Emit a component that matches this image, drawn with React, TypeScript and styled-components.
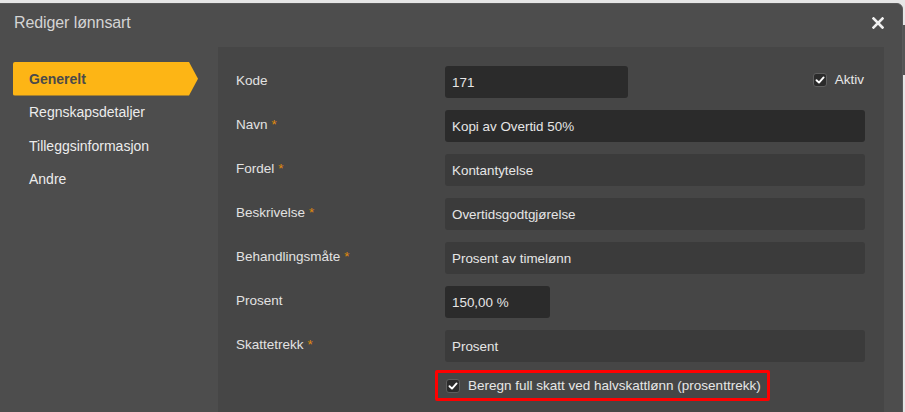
import React from 'react';
import styled, { createGlobalStyle } from 'styled-components';

const GlobalStyle = createGlobalStyle`
  html, body {
    margin: 0;
    padding: 0;
    background: #e6e6e6;
    font-family: 'Liberation Sans', Arial, sans-serif;
    overflow: hidden;
  }
`;

type Field = {
  label: string;
  value: string;
  required?: boolean;
  width?: number;
  readOnly?: boolean;
};

const fields: Field[] = [
  { label: 'Kode', value: '171', width: 183 },
  { label: 'Navn', value: 'Kopi av Overtid 50%', required: true },
  { label: 'Fordel', value: 'Kontantytelse', required: true, readOnly: true },
  { label: 'Beskrivelse', value: 'Overtidsgodtgjørelse', required: true, readOnly: true },
  { label: 'Behandlingsmåte', value: 'Prosent av timelønn', required: true, readOnly: true },
  { label: 'Prosent', value: '150,00 %', width: 105 },
  { label: 'Skattetrekk', value: 'Prosent', required: true, readOnly: true },
];

const tabs = ['Generelt', 'Regnskapsdetaljer', 'Tilleggsinformasjon', 'Andre'];

const CheckMark = () => (
  <svg width="10" height="10" viewBox="0 0 10 10">
    <path d="M1.5 5.2 L4 7.6 L8.6 2.4" fill="none" stroke="#fff" strokeWidth="1.9" strokeLinecap="round" strokeLinejoin="round" />
  </svg>
);

const Checkbox: React.FC<{ label: string }> = ({ label }) => (
  <CheckLabel>
    <Box>
      <CheckMark />
    </Box>
    {label}
  </CheckLabel>
);

export default function App() {
  return (
    <>
      <GlobalStyle />
      <Page>
        <Backdrop />
        <Modal>
          <Header>
            <Title>Rediger lønnsart</Title>
            <Close aria-label="Lukk">
              <svg width="12" height="12" viewBox="0 0 12 12">
                <path d="M1.5 1.5 L10.5 10.5 M10.5 1.5 L1.5 10.5" stroke="#f0f0f0" strokeWidth="2.6" strokeLinecap="square" />
              </svg>
            </Close>
          </Header>
          <Body>
            <Sidebar>
              {tabs.map((t, i) => (
                <Tab key={t} active={i === 0}>
                  {t}
                </Tab>
              ))}
            </Sidebar>
            <Panel>
              {fields.map((f, i) => (
                <Row key={f.label}>
                  <Label>
                    {f.label}
                    {f.required && <Star>*</Star>}
                  </Label>
                  <Input readOnly={f.readOnly} style={f.width ? { width: f.width, flex: 'none' } : undefined}>
                    {f.value}
                  </Input>
                  {i === 0 && (
                    <Aktiv>
                      <Checkbox label="Aktiv" />
                    </Aktiv>
                  )}
                </Row>
              ))}
              <CheckRow>
                <Highlight>
                  <Checkbox label="Beregn full skatt ved halvskattlønn (prosenttrekk)" />
                </Highlight>
              </CheckRow>
            </Panel>
          </Body>
        </Modal>
      </Page>
    </>
  );
}

const Page = styled.div`
  position: relative;
  width: 905px;
  height: 412px;
  padding-top: 3px;
  box-sizing: border-box;
  overflow: hidden;
`;

// table rows of the page behind the dialog
const Backdrop = styled.div`
  position: absolute;
  right: 0;
  top: 25px;
  width: 4px;
  height: 50px;
  background: #555;
`;

const Modal = styled.div`
  position: relative;
  margin-left: -6px;
  width: 909px;
  height: 430px;
  background: #4d4d4d;
  border: 1px solid #5a5a5a;
  border-radius: 6px;
  box-sizing: border-box;
  display: flex;
  flex-direction: column;
`;

const Header = styled.div`
  height: 43px;
  box-sizing: border-box;
  display: flex;
  align-items: center;
  justify-content: space-between;
  padding: 0 18px 5px 19px;
`;

const Title = styled.h1`
  margin: 0;
  font-size: 16px;
  font-weight: normal;
  color: #d4d4d4;
  letter-spacing: -0.1px;
`;

const Close = styled.button`
  border: none;
  background: none;
  padding: 0;
  display: flex;
  cursor: pointer;
`;

const Body = styled.div`
  flex: 1;
  display: flex;
  gap: 20px;
  padding: 0 18px 0 18px;
`;

const Sidebar = styled.nav`
  width: 185px;
  padding-top: 15px;
  display: flex;
  flex-direction: column;
`;

const Tab = styled.div<{ active?: boolean }>`
  height: 33.5px;
  display: flex;
  align-items: center;
  padding-left: 16px;
  font-size: 14px;
  font-weight: ${({ active }) => (active ? 'bold' : 'normal')};
  color: ${({ active }) => (active ? '#4a4a4a' : '#ececec')};
  background: ${({ active }) => (active ? '#fdb515' : 'transparent')};
  clip-path: ${({ active }) =>
    active ? 'polygon(0 0, calc(100% - 9px) 0, 100% 50%, calc(100% - 9px) 100%, 0 100%)' : 'none'};
  border-radius: 2px 0 0 2px;
`;

const Panel = styled.section`
  flex: 1;
  background: #464646;
  padding: 19px 19px 0 18px;
  display: flex;
  flex-direction: column;
  gap: 12px;
`;

const Row = styled.div`
  display: flex;
  align-items: center;
  height: 32px;
`;

const Label = styled.label`
  width: 209px;
  flex: none;
  font-size: 13.5px;
  color: #e2e2e2;
  margin-top: -3px;
`;

const Star = styled.span`
  color: #e08a0c;
  margin-left: 4px;
`;

const Input = styled.div<{ readOnly?: boolean }>`
  flex: 1;
  height: 32px;
  box-sizing: border-box;
  border-radius: 3px;
  background: ${({ readOnly }) => (readOnly ? '#3b3b3b' : '#2b2b2b')};
  color: #e6e6e6;
  font-size: 13.4px;
  display: flex;
  align-items: center;
  padding-left: 7px;
`;

const Aktiv = styled.div`
  margin-left: auto;
  margin-right: 1px;
  margin-top: -5px;
`;

const CheckLabel = styled.label`
  display: flex;
  align-items: center;
  gap: 8px;
  font-size: 13.5px;
  color: #e6e6e6;
`;

const Box = styled.span`
  width: 14px;
  height: 14px;
  box-sizing: border-box;
  border: 1px solid #5e5e5e;
  border-radius: 3px;
  background: #2b2b2b;
  display: flex;
  align-items: center;
  justify-content: center;
`;

const CheckRow = styled.div`
  padding-left: 199px;
  margin-top: -4px;
`;

const Highlight = styled.div`
  display: inline-flex;
  align-items: center;
  height: 31px;
  box-sizing: border-box;
  border: 3px solid #ff0000;
  border-radius: 2px;
  padding: 0 6px 0 8px;
`;
